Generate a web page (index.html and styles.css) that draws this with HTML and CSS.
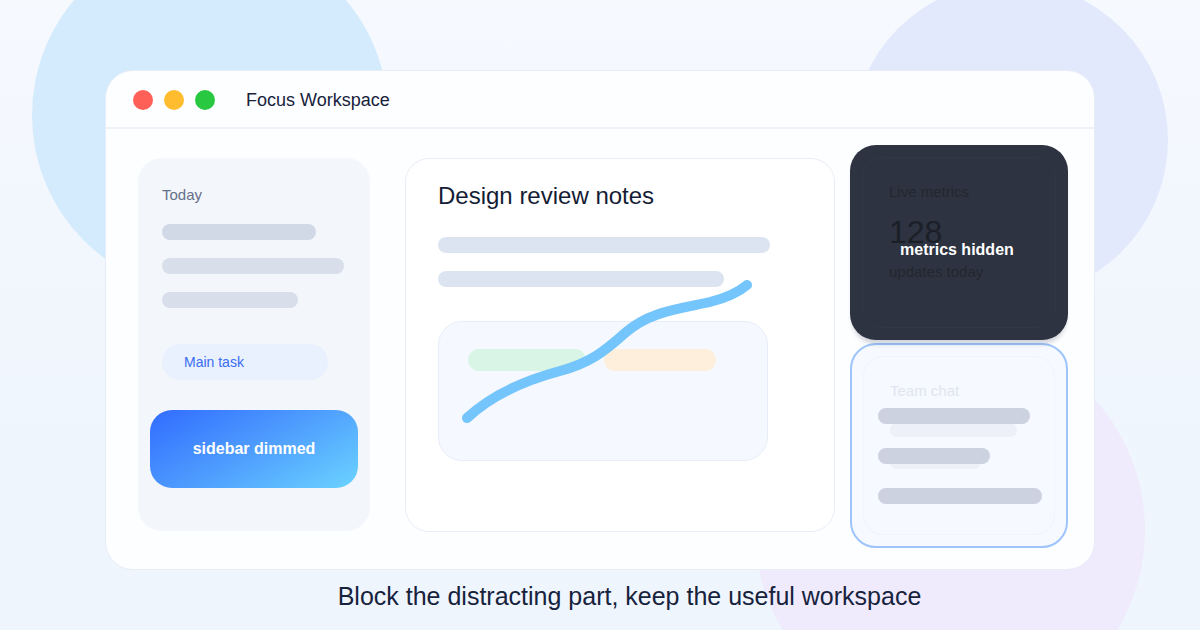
FILE: index.html
```html
<!DOCTYPE html>
<html>
<head>
<meta charset="utf-8">
<link rel="stylesheet" href="styles.css">
</head>
<body>
<div class="stage">
  <div class="blob blob-a"></div>
  <div class="blob blob-b"></div>
  <div class="blob blob-c"></div>

  <div class="window">
    <div class="titlebar">
      <span class="dot dot-red"></span>
      <span class="dot dot-yellow"></span>
      <span class="dot dot-green"></span>
      <span class="title">Focus Workspace</span>
    </div>
    <div class="body">
      <div class="sidebar">
        <div class="label">Today</div>
        <div class="bar bar-s1"></div>
        <div class="bar bar-s2"></div>
        <div class="bar bar-s3"></div>
        <div class="pill-task">Main task</div>
        <div class="dimmed">sidebar dimmed</div>
      </div>

      <div class="notes">
        <div class="notes-title">Design review notes</div>
        <div class="nbar nbar-1"></div>
        <div class="nbar nbar-2"></div>
        <div class="inner-box">
          <span class="chip chip-green"></span>
          <span class="chip chip-orange"></span>
        </div>
        <svg class="curve" width="430" height="374" viewBox="0 0 430 374">
          <path d="M62,261 C90,235 125,222 155,214 C185,206 200,194 220,176 C245,154 275,152 305,145 C325,140 335,134 342,128" fill="none" stroke="#75c5fd" stroke-width="10" stroke-linecap="round"/>
        </svg>
      </div>

      <div class="right">
        <div class="metrics">
          <div class="metrics-inner">
            <div class="m-label">Live metrics</div>
            <div class="m-num">128</div>
            <div class="m-sub">updates today</div>
          </div>
          <div class="m-hidden">metrics hidden</div>
        </div>
        <div class="chat">
          <div class="chat-inner">
            <div class="c-label">Team chat</div>
            <div class="cbar cbar-1"></div>
            <div class="cbar cbar-2"></div>
            <div class="cbar cbar-3"></div>
          </div>
          <div class="chat-overlay">
            <div class="obar obar-1"></div>
            <div class="obar obar-2"></div>
            <div class="obar obar-3"></div>
          </div>
        </div>
      </div>
    </div>
  </div>

  <div class="caption">Block the distracting part, keep the useful workspace</div>
</div>
</body>
</html>
```

FILE: styles.css
```css
* { box-sizing: border-box; }
html, body { margin: 0; padding: 0; }
body {
  font-family: "Liberation Sans", Arial, sans-serif;
  width: 1200px;
  height: 630px;
  overflow: hidden;
}
.stage {
  position: relative;
  width: 1200px;
  height: 630px;
  overflow: hidden;
  background: linear-gradient(180deg, #f6f9fe 0%, #f0f6fd 60%, #eef5fd 100%);
  display: flex;
  flex-direction: column;
}
.blob {
  position: absolute;
  border-radius: 50%;
}
.blob-a { left: 32px; top: -63px; width: 356px; height: 356px; background: #d3ebfc; }
.blob-b { left: 852px; top: -18px; width: 316px; height: 316px; background: #e3e9fc; }
.blob-c { left: 755px; top: 335px; width: 390px; height: 390px; background: #efebfc; }

.window {
  position: relative;
  margin: 70px 0 0 105px;
  width: 990px;
  height: 500px;
  background: #fdfeff;
  border: 1px solid #e7edf6;
  border-radius: 28px;
  display: flex;
  flex-direction: column;
}
.titlebar {
  height: 58px;
  flex: none;
  display: flex;
  align-items: center;
  padding-left: 27px;
  padding-top: 2px;
  border-bottom: 2px solid #eef2f9;
}
.dot { width: 20px; height: 20px; border-radius: 50%; margin-right: 11px; }
.dot-red { background: #fe5f57; }
.dot-yellow { background: #febc2e; }
.dot-green { background: #28c840; }
.title {
  margin-left: 20px;
  font-size: 18px;
  color: #17223d;
}

.body {
  display: flex;
  align-items: flex-start;
  padding-left: 32px;
}

.sidebar {
  margin-top: 29px;
  width: 232px;
  height: 373px;
  background: #f3f6fb;
  border-radius: 24px;
  padding: 28px 0 0 24px;
  display: flex;
  flex-direction: column;
}
.label {
  font-size: 15px;
  line-height: 18px;
  color: #657089;
}
.bar { height: 16px; border-radius: 8px; background: #d5dce8; }
.bar-s1 { width: 154px; margin-top: 20px; background: #d1d9e7; }
.bar-s2 { width: 182px; margin-top: 18px; background: #d8deea; }
.bar-s3 { width: 136px; margin-top: 18px; background: #d8deea; }
.pill-task {
  margin-top: 36px;
  width: 166px;
  height: 36px;
  border-radius: 18px;
  background: #e8f1fd;
  color: #3b6cf4;
  font-size: 14px;
  line-height: 36px;
  padding-left: 22px;
}
.dimmed {
  margin: 30px 0 0 -12px;
  width: 208px;
  height: 78px;
  border-radius: 22px;
  background: linear-gradient(150deg, #316cff 0%, #4e9dfe 50%, #6bd3ff 100%);
  color: #ffffff;
  font-size: 16px;
  font-weight: bold;
  display: flex;
  align-items: center;
  justify-content: center;
}

.notes {
  position: relative;
  margin: 29px 0 0 35px;
  width: 430px;
  height: 374px;
  background: #ffffff;
  border: 1px solid #e8eef7;
  border-radius: 24px;
  padding: 23px 0 0 32px;
}
.notes-title {
  font-size: 24px;
  line-height: 28px;
  color: #141d35;
}
.nbar { height: 16px; border-radius: 8px; background: #dbe4f0; }
.nbar-1 { width: 332px; margin-top: 27px; }
.nbar-2 { width: 286px; margin-top: 18px; }
.inner-box {
  margin-top: 34px;
  width: 330px;
  height: 140px;
  background: #f5f8fe;
  border: 1px solid #e7edf8;
  border-radius: 24px;
  padding: 27px 0 0 29px;
  display: flex;
  gap: 18px;
}
.chip { height: 22px; border-radius: 11px; }
.chip-green { width: 118px; background: #d9f5e5; }
.chip-orange { width: 112px; background: #fdefdb; }
.curve {
  position: absolute;
  left: -1px;
  top: -2px;
}

.right {
  margin: 16px 0 0 15px;
  width: 218px;
  display: flex;
  flex-direction: column;
}
.metrics {
  position: relative;
  z-index: 2;
  height: 195px;
  background: #2d3340;
  border-radius: 26px;
  padding: 12px;
  box-shadow: 0 6px 4px -2px rgba(60, 70, 95, 0.22);
}
.metrics-inner {
  height: 100%;
  border: 1px solid #313745;
  border-radius: 20px;
  padding: 25px 0 0 26px;
}
.m-label { font-size: 15px; line-height: 18px; color: #22272f; }
.m-num { font-size: 32px; line-height: 36px; margin-top: 13px; color: #1b1f28; }
.m-sub { font-size: 15px; line-height: 18px; margin-top: 13px; color: #22272f; }
.m-hidden {
  position: absolute;
  left: 50px;
  top: 95px;
  color: #ffffff;
  font-size: 16px;
  font-weight: bold;
  line-height: 20px;
}
.chat {
  position: relative;
  margin-top: 3px;
  height: 205px;
  background: #f6f9ff;
  border: 2px solid #9dc5fb;
  border-radius: 26px;
  padding: 11px;
}
.chat-inner {
  height: 100%;
  border: 1px solid #f1f4fb;
  border-radius: 20px;
  padding: 25px 0 0 26px;
}
.c-label { font-size: 15px; line-height: 18px; color: #e1e5ef; }
.cbar { height: 14px; border-radius: 7px; background: #edf0f8; }
.cbar-1 { width: 127px; margin-top: 23px; }
.cbar-2 { width: 91px; margin-top: 18px; }
.cbar-3 { width: 146px; margin-top: 20px; }
.chat-overlay {
  position: absolute;
  left: 26px;
  top: 63px;
  display: flex;
  flex-direction: column;
  gap: 24px;
}
.obar { height: 16px; border-radius: 8px; background: #ccd2df; }
.obar-1 { width: 152px; }
.obar-2 { width: 112px; }
.obar-3 { width: 164px; }

.caption {
  position: relative;
  margin-top: 12px;
  padding-left: 59px;
  text-align: center;
  font-size: 25px;
  line-height: 28px;
  color: #17223d;
}
```
